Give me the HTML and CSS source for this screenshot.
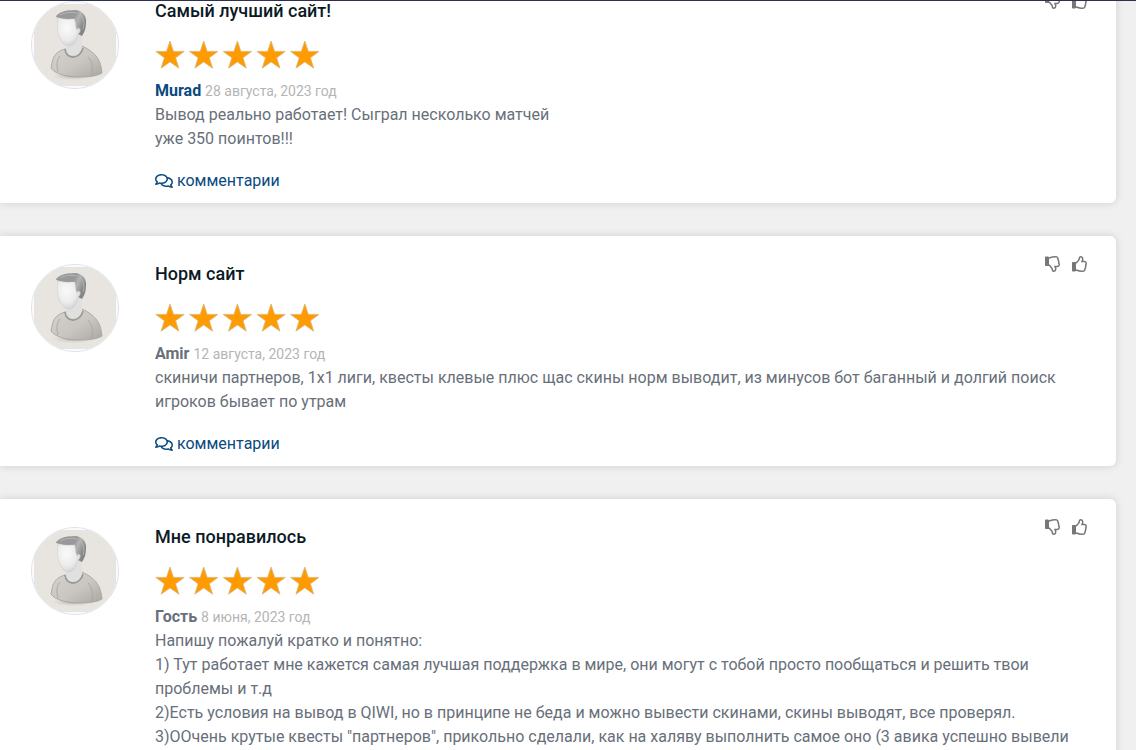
FILE: index.html
```html
<!DOCTYPE html>
<html lang="ru">
<head>
<meta charset="utf-8">
<title>Отзывы</title>
<meta name="viewport" content="width=device-width, initial-scale=1">
<link rel="stylesheet" href="styles.css">
</head>
<body>
<svg class="sprite" aria-hidden="true">
  <defs>
    <linearGradient id="shirt-fill" x1="0" x2="1" y1="0" y2="1"><stop offset="0" stop-color="#d6d3ce"/><stop offset=".55" stop-color="#c9c6c1"/><stop offset="1" stop-color="#aaa7a3"/></linearGradient>
    <linearGradient id="hair-fill" x1="0" x2="1" y1="0" y2=".4"><stop offset="0" stop-color="#8c8c8c"/><stop offset=".4" stop-color="#a8a8a8"/><stop offset=".6" stop-color="#969696"/><stop offset=".75" stop-color="#b4b4b4"/><stop offset="1" stop-color="#858585"/></linearGradient>
    <radialGradient id="face-fill" cx=".4" cy=".35" r=".7"><stop offset="0" stop-color="#fafafa"/><stop offset=".6" stop-color="#ececec"/><stop offset="1" stop-color="#cfcfcf"/></radialGradient>
    <radialGradient id="shade-fill"><stop offset="0" stop-color="#aaa6a1"/><stop offset="1" stop-color="#e8e5e1" stop-opacity="0"/></radialGradient>
  </defs>
  <symbol id="person" viewBox="1 1 86 86">
    <rect width="88" height="88" fill="#fafafa"/>
    <rect x="3" y="3" width="82" height="82" fill="#e8e5e0"/>
    <ellipse cx="42" cy="75" rx="25" ry="5" fill="url(#shade-fill)"/>
    <path d="M34 48C27 50 22 54 21 62L20 67C24 73 36 76 48 76C58 76 66 75 71 72C70 60 66 52 51 45Z" fill="url(#shirt-fill)" stroke="#a3a19d" stroke-width=".8"/>
    <path d="M27 71C25 64 26 58 29 55M61 74C62 66 61 60 57 56" fill="none" stroke="#a5a29e" stroke-width=".8"/>
    <path d="M35 43V51C37 57 47 56 51 48V32L44 30Z" fill="#e0e0e0"/>
    <path d="M34 48C35 59 49 59 52 47" fill="none" stroke="#989693" stroke-width="1.6"/>
    <path d="M25 16C27 12 34 9 42 9C51 8 56 15 55 22C55 28 53 32 51 35L45 32L40 20Z" fill="url(#hair-fill)"/>
    <path d="M27 17C25 28 28 42 36 45C43 46 46 39 47 33C50 31 50 27 47 27L46 29C44 25 45 20 43 17C38 19 32 18 27 17Z" fill="url(#face-fill)" stroke="#cdcdcd" stroke-width=".5"/>
    <path d="M25 15C30 10 39 8 46 12L43 18C38 17 32 19 25 15Z" fill="#999"/>
    <path d="M29 14C35 11 41 11 46 12M49 13C53 18 54 23 52 28" fill="none" stroke="#b8b8b8" stroke-width=".9"/>
  </symbol>
  <symbol id="stars" viewBox="0 0 165 30">
    <g fill="#ff9b00" stroke="#d7b777" stroke-width=".8">
      <path id="star" d="M15 1L18.5 11.4H29.2L20.6 17.8L23.9 28.2L15 21.9L6.1 28.2L9.4 17.8L.8 11.4H11.5Z"/>
      <use href="#star" x="33.7"/><use href="#star" x="67.4"/><use href="#star" x="101.1"/><use href="#star" x="134.8"/>
    </g>
  </symbol>
  <symbol id="thumb" viewBox="0 0 512 512"><path d="M466.27 286.69C475.04 271.84 480 256 480 236.85c0-44.015-37.218-85.58-85.82-85.58H357.7c4.92-12.81 8.85-28.13 8.85-46.54C366.55 31.936 328.86 0 271.28 0c-61.607 0-58.093 94.933-71.76 108.6-22.747 22.747-49.615 66.447-68.76 83.4H32c-17.673 0-32 14.327-32 32v240c0 17.673 14.327 32 32 32h64c14.893 0 27.408-10.174 30.978-23.95 44.509 1.001 75.06 39.94 177.802 39.94 7.22 0 15.22.01 22.22.01 77.117 0 111.986-39.423 112.94-95.33 13.319-18.425 20.299-43.122 17.34-66.99 9.854-18.452 13.664-40.343 8.99-62.99zm-61.75 53.83c12.56 21.13 1.26 49.41-13.94 57.57 7.7 48.78-17.608 65.9-53.12 65.9h-37.82c-71.639 0-118.029-37.82-171.64-37.82V240h10.92c28.36 0 67.98-70.89 94.54-97.46 28.36-28.36 18.91-75.63 37.82-94.54 47.27 0 47.27 32.98 47.27 56.73 0 39.17-28.36 56.72-28.36 94.54h103.99c21.11 0 37.73 18.91 37.82 37.82.09 18.9-12.82 37.81-22.27 37.81 13.489 14.555 16.371 45.236-5.21 65.62z"/></symbol>
  <symbol id="comments" viewBox="0 0 576 512"><path d="M532 386.2c27.5-27.1 44-61.1 44-98.2 0-80-76.5-146.1-176.2-157.9C368.3 72.5 294.3 32 208 32 93.1 32 0 103.6 0 192c0 37 16.5 71 44 98.2-15.3 30.7-37.3 54.5-37.7 54.9-6.3 6.7-8.1 16.5-4.4 25 3.6 8.5 12 14 21.2 14 53.5 0 96.7-20.2 125.2-38.8 9.2 2.1 18.7 3.7 28.4 4.9C208.1 407.6 281.8 448 368 448c20.8 0 40.8-2.4 59.8-6.8C456.3 459.7 499.4 480 553 480c9.2 0 17.5-5.5 21.2-14 3.6-8.5 1.9-18.3-4.4-25-.4-.3-22.5-24.1-37.8-54.8zm-392.8-92.3L122.1 305c-14.1 9.1-28.5 16.3-43.1 21.4 2.7-4.7 5.4-9.7 8-14.8l15.5-31.1L77.7 256C64.2 242.6 48 220.7 48 192c0-60.7 73.3-112 160-112s160 51.3 160 112-73.3 112-160 112c-16.5 0-33-1.9-49-5.6l-19.8-4.5zM498.3 352l-24.7 24.4 15.5 31.1c2.6 5.1 5.3 10.1 8 14.8-14.6-5.1-29-12.3-43.1-21.4l-17.1-11.1-19.9 4.6c-16 3.7-32.5 5.6-49 5.6-54 0-102.2-20.1-131.3-49.7C338 339.5 416 272.9 416 192c0-3.4-.4-6.7-.7-10C479.7 196.5 528 238.8 528 288c0 28.7-16.2 50.6-29.7 64z"/></symbol>
</svg>

<div class="topbar"></div>
<main class="viewport">
  <div class="reviews">
    <article class="review">
      <svg class="avatar" aria-hidden="true"><use href="#person"/></svg>
      <div class="content">
        <h2 class="title">Самый лучший сайт!</h2>
        <svg class="rating" role="img" aria-label="5 из 5"><use href="#stars"/></svg>
        <p class="meta"><a class="author linked" href="#murad">Murad</a> <time class="date" datetime="2023-08-28">28 августа, 2023 год</time></p>
        <p class="text">Вывод реально работает! Сыграл несколько матчей<br>уже 350 поинтов!!!</p>
        <a class="comments" href="#comments-1"><svg class="bubble" aria-hidden="true"><use href="#comments"/></svg>комментарии</a>
      </div>
      <div class="votes">
        <button class="vote down" type="button" aria-label="Не нравится"><svg><use href="#thumb"/></svg></button>
        <button class="vote" type="button" aria-label="Нравится"><svg><use href="#thumb"/></svg></button>
      </div>
    </article>

    <article class="review">
      <svg class="avatar" aria-hidden="true"><use href="#person"/></svg>
      <div class="content">
        <h2 class="title">Норм сайт</h2>
        <svg class="rating" role="img" aria-label="5 из 5"><use href="#stars"/></svg>
        <p class="meta"><b class="author">Amir</b> <time class="date" datetime="2023-08-12">12 августа, 2023 год</time></p>
        <p class="text">скиничи партнеров, 1х1 лиги, квесты клевые плюс щас скины норм выводит, из минусов бот баганный и долгий поиск игроков бывает по утрам</p>
        <a class="comments" href="#comments-2"><svg class="bubble" aria-hidden="true"><use href="#comments"/></svg>комментарии</a>
      </div>
      <div class="votes">
        <button class="vote down" type="button" aria-label="Не нравится"><svg><use href="#thumb"/></svg></button>
        <button class="vote" type="button" aria-label="Нравится"><svg><use href="#thumb"/></svg></button>
      </div>
    </article>

    <article class="review">
      <svg class="avatar" aria-hidden="true"><use href="#person"/></svg>
      <div class="content">
        <h2 class="title">Мне понравилось</h2>
        <svg class="rating" role="img" aria-label="5 из 5"><use href="#stars"/></svg>
        <p class="meta"><b class="author">Гость</b> <time class="date" datetime="2023-06-08">8 июня, 2023 год</time></p>
        <p class="text">Напишу пожалуй кратко и понятно:<br>1) Тут работает мне кажется самая лучшая поддержка в мире, они могут с тобой просто пообщаться и решить твои проблемы и т.д<br>2)Есть условия на вывод в QIWI, но в принципе не беда и можно вывести скинами, скины выводят, все проверял.<br>3)ООчень крутые квесты "партнеров", прикольно сделали, как на халяву выполнить самое оно (3 авика успешно вывели</p>
      </div>
      <div class="votes">
        <button class="vote down" type="button" aria-label="Не нравится"><svg><use href="#thumb"/></svg></button>
        <button class="vote" type="button" aria-label="Нравится"><svg><use href="#thumb"/></svg></button>
      </div>
    </article>
  </div>
</main>
</body>
</html>
```
FILE: styles.css
```css
* { box-sizing: border-box; }

body {
  margin: 0;
  background: #f0f0f0;
  color: #686f7a;
  font: 16px/24px Roboto, "Liberation Sans", sans-serif;
}

.sprite { position: absolute; width: 0; height: 0; }

.topbar {
  position: fixed;
  z-index: 2;
  top: 0;
  left: 0;
  right: 0;
  height: 1px;
  background: #2f3050;
}

.viewport { height: 100vh; overflow: hidden; }

/* The list is scrolled part-way past its first card. */
.reviews {
  display: flex;
  flex-direction: column;
  gap: 33px;
  margin: -27px 20px 0 0;
}

.review {
  position: relative;
  display: flex;
  gap: 36px;
  flex-shrink: 0;
  padding: 26px 28px 10px 31px;
  background: #fff;
  border-radius: 0 6px 6px 0;
  box-shadow: 0 0 8px rgba(0, 0, 0, 0.14);
}

.avatar {
  flex: none;
  width: 88px;
  height: 88px;
  margin-top: 2px;
  border: 1px solid #d9e0ea;
  border-radius: 50%;
}

.content { flex: 1; min-width: 0; }

.title {
  margin: 0;
  color: #0b1a26;
  font-size: 18px;
  font-weight: 500;
  line-height: 24px;
}

.rating {
  display: block;
  width: 165px;
  height: 30px;
  margin: 17px 0 9px;
}

.meta, .text { margin: 0; }

.author { color: #686f7a; font-weight: 700; text-decoration: none; }
.author.linked { color: #0a4a80; }
.date { color: #b5b5b5; font-size: 14px; }

.comments {
  display: flex;
  align-items: center;
  gap: 4px;
  width: max-content;
  margin-top: 18px;
  color: #0a4a80;
  text-decoration: none;
}

.bubble { width: 18px; height: 16px; fill: currentColor; }

/* Votes sit over the top right corner of a card. */
.votes {
  position: absolute;
  top: 20px;
  right: 28px;
  display: flex;
  gap: 11px;
}

.vote {
  display: flex;
  padding: 0;
  border: 0;
  background: none;
  color: #777;
  cursor: pointer;
}

.vote svg { width: 16px; height: 16px; fill: currentColor; }
.vote.down svg { transform: scaleY(-1); }
```
